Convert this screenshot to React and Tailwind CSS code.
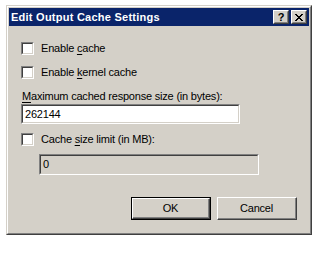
function CheckBox() {
  return (
    <div className="h-[13px] w-[13px] shrink-0 border border-t-[#808080] border-l-[#808080] border-r-white border-b-white">
      <div className="h-full w-full border border-t-[#404040] border-l-[#404040] border-r-[#d4d0c8] border-b-[#d4d0c8] bg-white" />
    </div>
  );
}

function CheckRow({ before, hot, after }) {
  return (
    <div className="flex h-[13px] items-center">
      <CheckBox />
      <span className="ml-[7px] leading-[13px]">
        {before}
        <span className="underline underline-offset-[2px]">{hot}</span>
        {after}
      </span>
    </div>
  );
}

function Edit({ value, disabled, className }) {
  return (
    <div className={`border border-t-[#808080] border-l-[#808080] border-r-white border-b-white ${className}`}>
      <div
        className={`flex h-full items-center border border-t-[#404040] border-l-[#404040] border-r-[#d4d0c8] border-b-[#d4d0c8] pl-[2px] ${
          disabled ? "bg-[#d4d0c8]" : "bg-white"
        }`}
      >
        {value}
      </div>
    </div>
  );
}

function CaptionButton({ children }) {
  return (
    <div className="h-[14px] w-[16px] border border-t-white border-l-white border-r-[#404040] border-b-[#404040]">
      <div className="flex h-full items-center justify-center border border-t-[#d4d0c8] border-l-[#d4d0c8] border-r-[#808080] border-b-[#808080] bg-[#d4d0c8]">
        {children}
      </div>
    </div>
  );
}

function PushButton({ label, isDefault }) {
  if (isDefault) {
    return (
      <div className="h-[23px] w-[80px] border border-black">
        <div className="flex h-full items-center justify-center border border-t-white border-l-white border-r-[#404040] border-b-[#404040] bg-[#d4d0c8]">
          <div className="flex h-full w-full items-center justify-center border-r border-b border-[#808080]">{label}</div>
        </div>
      </div>
    );
  }
  return (
    <div className="h-[23px] w-[80px] border border-t-white border-l-white border-r-[#404040] border-b-[#404040]">
      <div className="flex h-full items-center justify-center border-r border-b border-[#808080] bg-[#d4d0c8]">{label}</div>
    </div>
  );
}

export default function App() {
  return (
    <div
      className="min-h-screen bg-white pl-[6px] pt-[5px] text-[11px] tracking-[-0.2px] text-black"
      style={{ fontFamily: '"Liberation Sans", Arial, sans-serif' }}
    >
      <div className="h-[230px] w-[306px] border border-t-[#d4d0c8] border-l-[#d4d0c8] border-r-[#404040] border-b-[#404040]">
        <div className="flex h-full flex-col border border-t-white border-l-white border-r-[#808080] border-b-[#808080] bg-[#d4d0c8] p-px">
          <div className="flex h-[18px] items-center justify-between bg-[#0a246a] pl-[2px] pr-[2px]">
            <span className="font-bold tracking-[0.25px] text-white">Edit Output Cache Settings</span>
            <div className="flex gap-[2px]">
              <CaptionButton>
                <span className="text-[11px] leading-none font-bold">?</span>
              </CaptionButton>
              <CaptionButton>
                <svg width="8" height="7" viewBox="0 0 8 7" shapeRendering="crispEdges">
                  <path d="M0 0h2v1h-2zM6 0h2v1h-2zM1 1h2v1h-2zM5 1h2v1h-2zM2 2h4v1h-4zM3 3h2v1h-2zM2 4h4v1h-4zM1 5h2v1h-2zM5 5h2v1h-2zM0 6h2v1h-2zM6 6h2v1h-2z" fill="#000" />
                </svg>
              </CaptionButton>
            </div>
          </div>

          <div className="flex flex-col pl-[12px] pt-[16px]">
            <CheckRow before="Enable " hot="c" after="ache" />
            <div className="mt-[11px]">
              <CheckRow before="Enable " hot="k" after="ernel cache" />
            </div>
            <div className="mt-[11px] pl-[1px] leading-[13px]">
              <span className="underline underline-offset-[2px]">M</span>aximum cached response size (in bytes):
            </div>
            <Edit value="262144" className="mt-px h-[20px] w-[219px]" />
            <div className="mt-[9px]">
              <CheckRow before="Cache " hot="s" after="ize limit (in MB):" />
            </div>
            <Edit value="0" disabled className="ml-[18px] mt-[8px] h-[21px] w-[220px]" />
            <div className="mt-[22px] flex justify-end gap-[6px] pr-[12px]">
              <PushButton label="OK" isDefault />
              <PushButton label="Cancel" />
            </div>
          </div>
        </div>
      </div>
    </div>
  );
}
